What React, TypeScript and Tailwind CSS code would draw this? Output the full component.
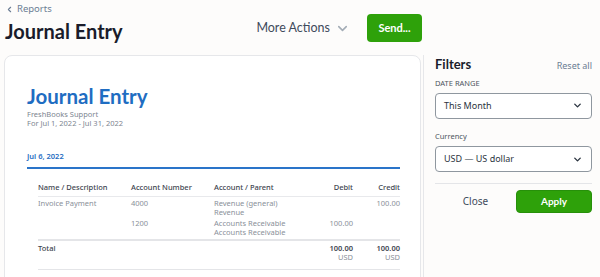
import { ChevronLeft, ChevronDown } from 'lucide-react';

const head = { fontFamily: 'Lato, "Noto Sans", sans-serif' };
const body = { fontFamily: '"Noto Sans", "Open Sans", sans-serif' };

function Select({ value }: { value: string }) {
  return (
    <div className="flex h-[26px] items-center justify-between rounded border border-[#8f979f] bg-white pl-[8px] pr-[8px] text-[9px] text-[#2b3440]">
      <span>{value}</span>
      <ChevronDown size={11} strokeWidth={3} className="text-[#2b3440]" />
    </div>
  );
}

export default function App() {
  return (
    <div className="flex h-[277px] w-[600px] overflow-hidden bg-[#fdfcfb]" style={body}>
      <div className="w-[423px] shrink-0">
        <div className="flex h-[55px] items-start justify-between pr-[1px]">
          <div className="pl-[5px] pt-[2px]">
            <div className="flex items-center gap-[3px] text-[9.5px] text-[#6b7c93]">
              <ChevronLeft size={9} strokeWidth={3} />
              <span>Reports</span>
            </div>
            <h1 className="mt-[2px] text-[20px] font-bold leading-[26px] text-[#1a1c2b]" style={head}>
              Journal Entry
            </h1>
          </div>
          <div className="flex items-center pt-[14px]">
            <span className="text-[12.5px] text-[#3f4b5b]" style={head}>More Actions</span>
            <ChevronDown size={15} strokeWidth={2.5} className="ml-[5px] text-[#a3acb6]" />
            <button
              className="ml-[17px] h-[28px] w-[55px] rounded bg-[#2ea10a] text-[11px] font-bold text-white"
              style={head}
            >
              Send...
            </button>
          </div>
        </div>
        <div className="ml-[4px] h-[240px] w-[417px] rounded-t-lg border border-[#e6e7ea] bg-white pl-[22px] pr-[20px] pt-[27px]">
          <h2 className="text-[20.5px] font-bold leading-[26px] text-[#1f6dc2]" style={head}>
            Journal Entry
          </h2>
          <div className="mt-[1px] text-[7.5px] leading-[9px] text-[#7d8590]">
            <div>FreshBooks Support</div>
            <div>For Jul 1, 2022 - Jul 31, 2022</div>
          </div>
          <div className="mt-[23px] text-[7.5px] font-semibold text-[#1f6dc2]">Jul 6, 2022</div>
          <div className="mt-[5px] h-[2px] bg-[#2a74c9]" />
          <div className="pl-[11px] text-[7.5px] text-[#8a9099]">
            <div className="grid grid-cols-[93px_83px_1fr_60px_47px] border-b border-[#e8e9ec] pb-[2px] pt-[13px] font-medium text-[#3e4550]">
              <span>Name / Description</span>
              <span>Account Number</span>
              <span>Account / Parent</span>
              <span className="text-right">Debit</span>
              <span className="text-right">Credit</span>
            </div>
            <div className="grid grid-cols-[93px_83px_1fr_60px_47px] pt-[2px] leading-[9px]">
              <span>Invoice Payment</span>
              <span>4000</span>
              <span>
                Revenue (general)
                <br />
                Revenue
              </span>
              <span />
              <span className="text-right">100.00</span>
            </div>
            <div className="grid grid-cols-[93px_83px_1fr_60px_47px] border-b-2 border-[#e4e5e8] pb-[2px] pt-[2px] leading-[9px]">
              <span />
              <span>1200</span>
              <span>
                Accounts Receivable
                <br />
                Accounts Receivable
              </span>
              <span className="text-right">100.00</span>
              <span />
            </div>
            <div className="grid grid-cols-[93px_83px_1fr_60px_47px] border-b border-[#e4e5e8] pb-[7px] pt-[3px] leading-[9px]">
              <span className="font-medium text-[#3e4550]">Total</span>
              <span />
              <span />
              <span className="text-right">
                <span className="font-semibold text-[#3e4550]">100.00</span>
                <br />
                USD
              </span>
              <span className="text-right">
                <span className="font-semibold text-[#3e4550]">100.00</span>
                <br />
                USD
              </span>
            </div>
          </div>
        </div>
      </div>
      <div className="mt-[55px] flex-1 border-l border-[#e6e7ea] pl-[11px] pr-[8px] pt-0">
        <div className="flex items-baseline justify-between">
          <span className="text-[13px] font-bold text-[#1a1c2b]" style={head}>Filters</span>
          <span className="text-[9px] text-[#6b7c93]">Reset all</span>
        </div>
        <div className="mt-[3px] text-[7.5px] text-[#4d5560]">DATE RANGE</div>
        <div className="mt-[4px]">
          <Select value="This Month" />
        </div>
        <div className="mt-[12px] text-[7.5px] text-[#4d5560]">Currency</div>
        <div className="mt-[4px]">
          <Select value="USD — US dollar" />
        </div>
        <div className="mt-[11px] border-t border-[#e4e5e8]" />
        <div className="mt-[6px] flex items-center">
          <span className="w-[81px] text-center text-[10px] text-[#3f4b5b]">Close</span>
          <button
            className="h-[23px] flex-1 rounded border border-[#27900a] bg-[#2ea10a] text-[10px] font-bold text-white"
            style={head}
          >
            Apply
          </button>
        </div>
      </div>
    </div>
  );
}
